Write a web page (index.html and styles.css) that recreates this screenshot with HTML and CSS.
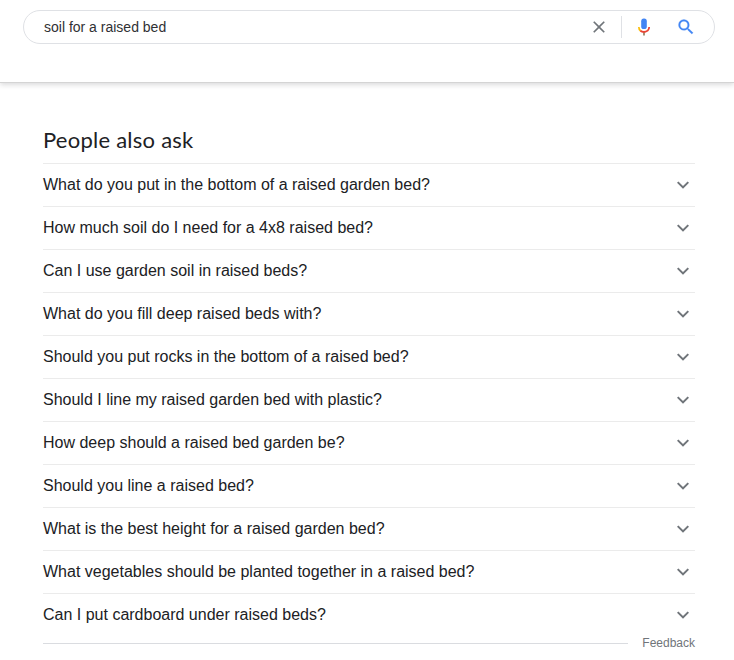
FILE: index.html
```html
<!DOCTYPE html>
<html lang="en">
<head>
<meta charset="utf-8">
<title>soil for a raised bed</title>
<link rel="stylesheet" href="styles.css">
</head>
<body>
<svg class="defs" width="0" height="0"><symbol id="chevron" viewBox="0 0 24 24"><path d="M7.41 8.4 12 12.9l4.59-4.5L18 9.8l-6 6-6-6z"/></symbol></svg>
<header class="header">
  <form class="search">
    <span class="query">soil for a raised bed</span>
    <svg class="icon clear" viewBox="0 0 24 24"><path d="M19 6.41 17.59 5 12 10.59 6.41 5 5 6.41 10.59 12 5 17.59 6.41 19 12 13.41 17.59 19 19 17.59 13.41 12z"/></svg>
    <span class="divider"></span>
    <svg class="icon mic" viewBox="0 0 20 20"><rect x="7.2" y="1.6" width="5.6" height="10.4" rx="2.6" fill="#4285f4"/><path fill="#8f7654" d="M9.2 15h1.6v3.4H9.2z"/><path fill="#fbbc05" d="M4 10h1.7c0 1.4.5 2.4 1.5 3.2L6 14.6A6 6 0 0 1 4 10z"/><path fill="#ea4335" d="M5.8 14.4 7 13.1c.8.6 1.8 1 3 1 2.5 0 4.3-1.7 4.3-4.1H16c0 3.4-2.6 5.8-6 5.8-1.7 0-3.1-.5-4.2-1.4z"/></svg>
    <svg class="icon lens" viewBox="0 0 24 24"><path d="M15.5 14h-.79l-.28-.27A6.471 6.471 0 0 0 16 9.5 6.5 6.5 0 1 0 9.5 16c1.61 0 3.09-.59 4.23-1.57l.27.28v.79l5 4.99L20.49 19l-4.99-5zm-6 0C7.01 14 5 11.99 5 9.5S7.01 5 9.5 5 14 7.01 14 9.5 11.99 14 9.5 14z"/></svg>
  </form>
</header>
<main class="content">
  <h1 class="title">People also ask</h1>
  <ul class="questions">
    <li><span>What do you put in the bottom of a raised garden bed?</span><svg><use href="#chevron"/></svg></li>
    <li><span>How much soil do I need for a 4x8 raised bed?</span><svg><use href="#chevron"/></svg></li>
    <li><span>Can I use garden soil in raised beds?</span><svg><use href="#chevron"/></svg></li>
    <li><span>What do you fill deep raised beds with?</span><svg><use href="#chevron"/></svg></li>
    <li><span>Should you put rocks in the bottom of a raised bed?</span><svg><use href="#chevron"/></svg></li>
    <li><span>Should I line my raised garden bed with plastic?</span><svg><use href="#chevron"/></svg></li>
    <li><span>How deep should a raised bed garden be?</span><svg><use href="#chevron"/></svg></li>
    <li><span>Should you line a raised bed?</span><svg><use href="#chevron"/></svg></li>
    <li><span>What is the best height for a raised garden bed?</span><svg><use href="#chevron"/></svg></li>
    <li><span>What vegetables should be planted together in a raised bed?</span><svg><use href="#chevron"/></svg></li>
    <li><span>Can I put cardboard under raised beds?</span><svg><use href="#chevron"/></svg></li>
  </ul>
  <footer class="footer"><span class="rule"></span><span>Feedback</span></footer>
</main>
</body>
</html>
```
FILE: styles.css
```css
* { box-sizing: border-box; }
body { margin: 0; background: #fff; color: #202124; font-family: "Liberation Sans", Arial, sans-serif; overflow: hidden; }
.defs { display: block; }
.header { height: 83px; padding: 10px 19px 0 23px; border-bottom: 1px solid #d4d4d4; box-shadow: 0 2px 5px rgba(32,33,36,.16); }
.search { display: flex; align-items: center; height: 34px; border: 1px solid #dfe1e5; border-radius: 17px; padding: 0 18px 0 20px; }
.query { flex: 1; font-size: 14px; line-height: 32px; color: #303134; }
.icon { width: 20px; height: 20px; flex: none; }
.clear { fill: #70757a; margin-right: 12px; }
.divider { width: 1px; height: 22px; background: #dfe1e5; margin-right: 12px; }
.mic { margin-right: 22px; }
.lens { fill: #4285f4; stroke: #4285f4; stroke-width: .3; }
.content { width: 652px; margin: 43px 0 0 43px; }
.title { margin: 0; height: 37px; font: 400 22px/27px Lato, sans-serif; letter-spacing: .24px; }
.questions { list-style: none; margin: 0; padding: 0; }
.questions li { display: flex; align-items: center; justify-content: space-between; height: 43px; border-top: 1px solid #ebebeb; font-size: 16px; }
.questions svg { width: 24px; height: 24px; fill: #70757a; }
.footer { display: flex; align-items: center; justify-content: space-between; font-size: 12px; line-height: 14px; color: #70757a; }
.rule { width: 585px; height: 1px; background: #dadce0; }
```
